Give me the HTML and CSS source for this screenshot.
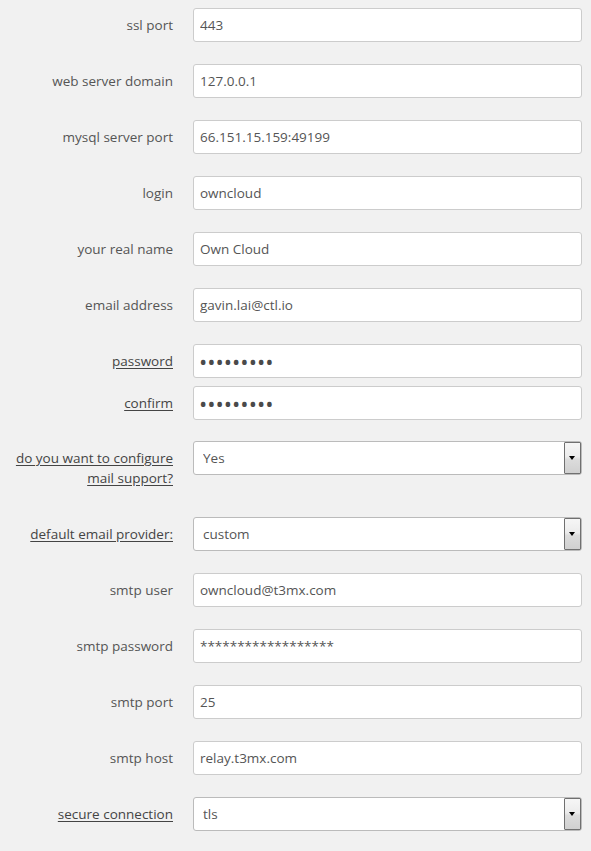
FILE: index.html
```html
<!DOCTYPE html>
<html>
<head>
<meta charset="utf-8">
<link rel="stylesheet" href="styles.css">
</head>
<body>
<form class="form">
  <div class="row"><label class="lbl">ssl port</label><input class="field" type="text" value="443"></div>
  <div class="row"><label class="lbl">web server domain</label><input class="field" type="text" value="127.0.0.1"></div>
  <div class="row"><label class="lbl">mysql server port</label><input class="field" type="text" value="66.151.15.159:49199"></div>
  <div class="row"><label class="lbl">login</label><input class="field" type="text" value="owncloud"></div>
  <div class="row"><label class="lbl">your real name</label><input class="field" type="text" value="Own Cloud"></div>
  <div class="row"><label class="lbl">email address</label><input class="field" type="text" value="gavin.lai@ctl.io"></div>
  <div class="row row-tight"><label class="lbl lbl-u">password</label><input class="field pw" type="password" value="123456789"></div>
  <div class="row"><label class="lbl lbl-u">confirm</label><input class="field pw" type="password" value="123456789"></div>
  <div class="row row-up"><label class="lbl lbl-u">do you want to configure mail support?</label>
    <div class="sel"><select class="field selbox"><option>Yes</option></select><span class="arrow"></span></div></div>
  <div class="row"><label class="lbl lbl-u">default email provider:</label>
    <div class="sel"><select class="field selbox"><option>custom</option></select><span class="arrow"></span></div></div>
  <div class="row"><label class="lbl">smtp user</label><input class="field" type="text" value="owncloud@t3mx.com"></div>
  <div class="row"><label class="lbl">smtp password</label><input class="field" type="text" value="******************"></div>
  <div class="row"><label class="lbl">smtp port</label><input class="field" type="text" value="25"></div>
  <div class="row"><label class="lbl">smtp host</label><input class="field" type="text" value="relay.t3mx.com"></div>
  <div class="row"><label class="lbl lbl-u">secure connection</label>
    <div class="sel"><select class="field selbox"><option>tls</option></select><span class="arrow"></span></div></div>
</form>
</body>
</html>
```
FILE: styles.css
```css
html, body {
  margin: 0;
  padding: 0;
  background: #f1f1f1;
}
body {
  font-family: "Open Sans", "Liberation Sans", sans-serif;
  font-size: 13.5px;
  color: #555;
}
.form {
  padding-top: 8px;
  display: flex;
  flex-direction: column;
  gap: 22px;
}
.row {
  display: grid;
  grid-template-columns: 173px 389px;
  column-gap: 20px;
  align-items: start;
}
.row-tight {
  margin-bottom: -14px;
}
.row-up {
  margin-top: -1px;
}
.lbl {
  text-align: right;
  line-height: 20px;
  padding: 7px 0;
  color: #555;
}
.lbl-u {
  color: #444;
  text-decoration: underline;
  text-underline-offset: 2px;
}
.field {
  box-sizing: border-box;
  width: 389px;
  height: 34px;
  margin: 0;
  border: 1px solid #ccc;
  border-radius: 3px;
  background: #fff;
  padding: 0 6px;
  font-family: "Open Sans", "Liberation Sans", sans-serif;
  font-size: 13.5px;
  color: #555;
  outline: none;
}
.pw {
  font-size: 22px;
  letter-spacing: 0;
  padding-left: 5px;
  color: #4a4a4a;
}
.sel {
  position: relative;
  width: 389px;
  height: 34px;
}
.selbox {
  appearance: none;
  -webkit-appearance: none;
  padding-left: 9px;
  border-color: #bbb;
}
.arrow {
  position: absolute;
  right: 1px;
  top: 1px;
  width: 17px;
  height: 32px;
  box-sizing: border-box;
  border: 1px solid #707070;
  border-radius: 1px;
  background: linear-gradient(#f6f6f6 0%, #ececec 45%, #dcdcdc 55%, #d0d0d0 100%);
  pointer-events: none;
}
.arrow::after {
  content: "";
  position: absolute;
  left: 4px;
  top: 13px;
  border-left: 3.5px solid transparent;
  border-right: 3.5px solid transparent;
  border-top: 4px solid #000;
}
```
